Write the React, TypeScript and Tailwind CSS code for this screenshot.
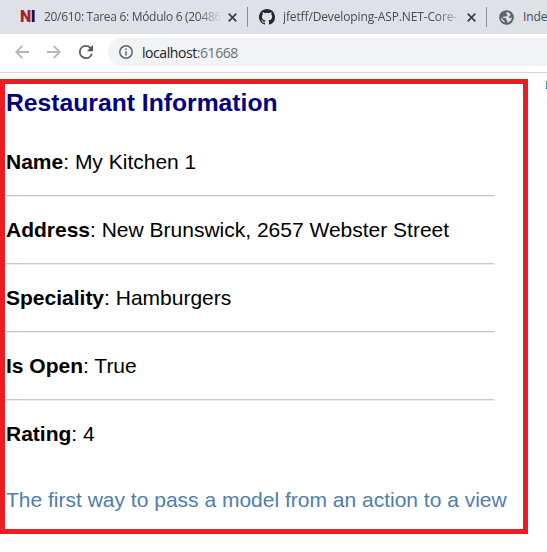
import type { ReactNode } from "react";

const fields = [
  ["Name", "My Kitchen 1"],
  ["Address", "New Brunswick, 2657 Webster Street"],
  ["Speciality", "Hamburgers"],
  ["Is Open", "True"],
  ["Rating", "4"],
];

function CloseIcon() {
  return (
    <svg className="h-[9px] w-[9px] shrink-0" viewBox="0 0 9 9" stroke="#3c4043" strokeWidth="1.7">
      <path d="M.7.7l7.6 7.6M8.3.7L.7 8.3" />
    </svg>
  );
}

function GithubIcon() {
  return (
    <svg className="h-4 w-4 shrink-0" viewBox="0 0 16 16" fill="#24292e">
      <path d="M8 0C3.58 0 0 3.58 0 8c0 3.54 2.29 6.53 5.47 7.59.4.07.55-.17.55-.38 0-.19-.01-.82-.01-1.49-2.01.37-2.53-.49-2.69-.94-.09-.23-.48-.94-.82-1.13-.28-.15-.68-.52-.01-.53.63-.01 1.08.58 1.23.82.72 1.21 1.87.87 2.33.66.07-.52.28-.87.51-1.07-1.78-.2-3.64-.89-3.64-3.95 0-.87.31-1.59.82-2.15-.08-.2-.36-1.02.08-2.12 0 0 .67-.21 2.2.82a7.6 7.6 0 0 1 4 0c1.53-1.04 2.2-.82 2.2-.82.44 1.1.16 1.92.08 2.12.51.56.82 1.27.82 2.15 0 3.07-1.87 3.75-3.65 3.95.29.25.54.73.54 1.48 0 1.07-.01 1.93-.01 2.2 0 .21.15.46.55.38A8.01 8.01 0 0 0 16 8c0-4.42-3.58-8-8-8z" />
    </svg>
  );
}

function GlobeIcon() {
  return (
    <svg className="h-[15px] w-[15px] shrink-0" viewBox="0 0 15 15">
      <circle cx="7.5" cy="7.5" r="7.3" fill="#5f6368" />
      <path
        d="M8.6 2.1c-1 .3-1.5 1-1.3 1.9.2.7 1 .5 1.2 1.1.2.8-.6 1.3-1.6 1.3H4.8c-.9 0-1 .8-.6 1.4.3.4 1 .3 1.6.3 1.2 0 1.5.7 1.5 1.6s.9.6 1.2 1.2c.2.6-.3 1.1-.9 1.5 3.2.2 5.4-2.3 5.2-5.2-.9 1-2.2 1.1-2.9.2-.5-.8.2-1.1.9-1.4.9-.4.8-1.5.1-2.2-.6-.8-1.4-1.4-2.3-1.7zM2 7.5c0 2.5 1.5 4.4 3.7 5.1.2-.9-.1-1.5-.9-2-.8-.5-.9-1.2-1.4-1.9z"
        fill="#dee1e6"
      />
    </svg>
  );
}

function TabTitle({ className, children }: { className: string; children: ReactNode }) {
  return <div className={`${className} shrink-0 whitespace-nowrap`}>{children}</div>;
}

export default function App() {
  return (
    <div className="h-[552px] w-[547px] overflow-hidden bg-white font-['Liberation_Sans',sans-serif]">
      <div className="flex h-[34px] items-center bg-[#dee1e6] pl-[20px] font-['Open_Sans',sans-serif] text-[12px] text-[#484b50]">
        <div className="w-[24px] shrink-0 font-['Roboto',sans-serif] text-[16px] leading-[16px] font-black tracking-[-0.5px] text-[#a91e2c]">
          N<span className="text-[#111820]">I</span>
        </div>
        <TabTitle className="w-[178px] tracking-[-0.3px] [mask-image:linear-gradient(to_right,black_86%,transparent)]">
          20/610: Tarea 6: Módulo 6 (20486
        </TabTitle>
        <div className="w-[6px] shrink-0" />
        <CloseIcon />
        <div className="ml-[10px] h-5 w-px shrink-0 bg-[#8b8e93]" />
        <div className="w-[11px] shrink-0" />
        <GithubIcon />
        <div className="w-[8px] shrink-0" />
        <TabTitle className="w-[176px] tracking-[-0.13px] [mask-image:linear-gradient(to_right,black_87%,transparent_103%)]">
          jfetff/Developing-ASP.NET-Core-
        </TabTitle>
        <div className="w-[8px] shrink-0" />
        <CloseIcon />
        <div className="ml-[10px] h-5 w-px shrink-0 bg-[#8b8e93]" />
        <div className="w-[12px] shrink-0" />
        <GlobeIcon />
        <div className="w-[9px] shrink-0" />
        <TabTitle className="w-[25px] tracking-[-0.14px]">Index</TabTitle>
      </div>

      <div className="flex h-[39px] items-center border-b border-[#d5d7da] pb-[2px] pl-[15px]">
        <svg className="h-[14px] w-[14px] shrink-0" viewBox="0 0 14 14" fill="none" stroke="#b5b7ba" strokeWidth="1.8">
          <path d="M14 7H1.5M7.3.8L1.2 7l6.1 6.2" />
        </svg>
        <svg className="ml-[18px] h-[14px] w-[14px] shrink-0" viewBox="0 0 14 14" fill="none" stroke="#b5b7ba" strokeWidth="1.8">
          <path d="M0 7h12.5M6.7.8L12.8 7l-6.1 6.2" />
        </svg>
        <svg className="ml-[18px] h-[14px] w-[14px] shrink-0" viewBox="4 4 16 16" fill="#55595e">
          <path d="M17.65 6.35A7.958 7.958 0 0 0 12 4a8 8 0 1 0 7.73 10h-2.08A6 6 0 1 1 12 6c1.66 0 3.14.69 4.22 1.78L13 11h7V4l-2.35 2.35z" />
        </svg>
        <div className="ml-[15px] flex h-[28px] flex-1 items-center rounded-l-full bg-[#f1f3f4] pl-[11px] font-['Open_Sans',sans-serif] text-[14px] text-[#202124]">
          <svg className="mr-[9px] h-[14px] w-[14px] shrink-0" viewBox="0 0 14 14" fill="none" stroke="#5f6368" strokeWidth="1.5">
            <circle cx="7" cy="7" r="6.2" />
            <path d="M7 6.2v4.2M7 3.5v1.5" />
          </svg>
          <span className="tracking-[-0.43px]">
            localhost<span className="text-[#6b6f74]">:61668</span>
          </span>
        </div>
      </div>

      <div className="flex items-start justify-between pt-[6px]">
        <main className="h-[455px] w-[528px] border-[5px] border-[#ea1d25] pt-[5px] pl-px text-[21px] leading-[24px] whitespace-nowrap text-black">
          <h1 className="mb-[33px] text-[24.7px] leading-[28px] font-bold text-[#000080]">Restaurant Information</h1>
          {fields.map(([label, value], index) => (
            <div key={label}>
              {index > 0 && (
                <hr className="my-[21px] h-[2px] w-[488px] border-t border-b border-t-[#c8c8c8] border-b-[#ececec]" />
              )}
              <p>
                <b>{label}</b>: {value}
              </p>
            </div>
          ))}
          <p className="mt-[42px] text-[#4f7dad]">The first way to pass a model from an action to a view</p>
        </main>
        <div className="flex flex-col pt-[2px]">
          <div className="h-[7px] w-px bg-[#5c94c5]" />
          <div className="h-px w-px bg-[#174e86]" />
          <div className="mt-[13px] h-px w-px bg-[#dcdcdc]" />
        </div>
      </div>
    </div>
  );
}
